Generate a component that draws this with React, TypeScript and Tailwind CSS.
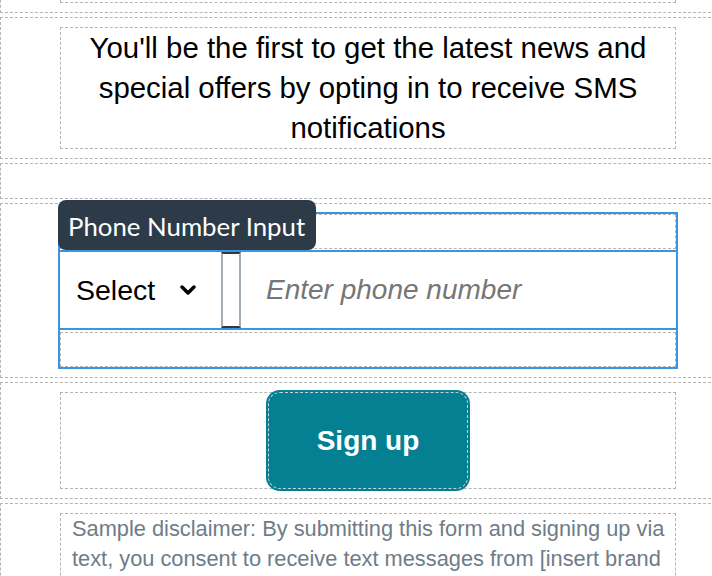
import { ChevronDown } from "lucide-react";

function Row({ children, className = "" }: { children?: React.ReactNode; className?: string }) {
  return (
    <div className={`border border-dashed border-[#b4b4b4] px-[59px] py-[9px] ${className}`}>
      {children}
    </div>
  );
}

function PhoneField() {
  return (
    <div className="relative my-[1px] flex h-[153px] flex-col outline-2 outline-[#3d94dc]">
      <div className="h-[35px] border border-dashed border-[#b4b4b4]" />
      <div className="mt-[1px] flex h-[80px] border-y-2 border-[#3d94dc] bg-white">
        <div className="flex w-[161px] items-center justify-between pl-[16px] pr-[21px] text-[28.5px] text-black">
          <span>Select</span>
          <ChevronDown size={24} strokeWidth={3.5} />
        </div>
        <div className="w-[20px] border-x-2 border-y-2 border-x-[#a3aeb4] border-y-[#2c3a47]" />
        <div className="flex flex-1 items-center pl-[25px] text-[28px] italic text-[#767676]">
          Enter phone number
        </div>
      </div>
      <div className="mt-[2px] h-[35px] border border-dashed border-[#b4b4b4]" />
      <div className="absolute left-[-2px] top-[-14px] flex h-[50px] w-[258px] items-center rounded-[8px] bg-[#2d3b48] pl-[10px] pt-[2px] font-['Lato',sans-serif] text-[25.8px] text-white">
        Phone Number Input
      </div>
    </div>
  );
}

export default function App() {
  return (
    <div className="h-[576px] w-[712px] overflow-hidden bg-white font-['Liberation_Sans',Arial,sans-serif]">
      <div className="mt-[-47px] flex w-[736px] flex-col gap-[4px]">
        <Row>
          <div className="h-[40px] border border-dashed border-[#b4b4b4]" />
        </Row>
        <Row>
          <p className="border border-dashed border-[#b4b4b4] text-center text-[29.4px] leading-[40px] text-black">
            You'll be the first to get the latest news and special offers by opting in to receive SMS notifications
          </p>
        </Row>
        <Row>
          <div className="h-[16px]" />
        </Row>
        <Row>
          <PhoneField />
        </Row>
        <Row>
          <div className="flex h-[97px] items-center justify-center border border-dashed border-[#b4b4b4]">
            <button className="h-[101px] w-[204px] shrink-0 rounded-[14px] bg-[#057f92] p-[2px]">
              <span className="flex h-full w-full items-center justify-center rounded-[12px] border border-dashed border-[#c9d3d7] text-[28px] font-bold text-white">
                Sign up
              </span>
            </button>
          </div>
        </Row>
        <Row>
          <p className="border border-dashed border-[#b4b4b4] pl-[11px] pr-[6px] text-[21.8px] leading-[30px] text-[#6f7c87]">
            Sample disclaimer: By submitting this form and signing up via text, you consent to receive text messages from [insert brand name] at the number provided. Consent is not a condition of purchase. Message and data rates may apply.
          </p>
        </Row>
      </div>
    </div>
  );
}
